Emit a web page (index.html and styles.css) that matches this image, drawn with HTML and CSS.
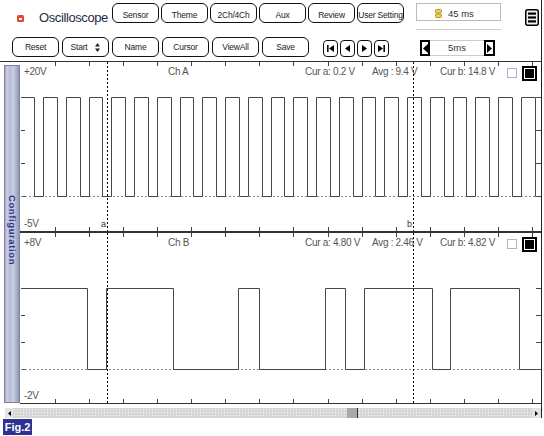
FILE: index.html
```html
<!DOCTYPE html>
<html lang="en">
<head>
    <meta charset="UTF-8">
    <meta name="viewport" content="width=device-width, initial-scale=1.0">
    <title>Oscilloscope</title>
    <link rel="stylesheet" href="styles.css">
</head>
<body>

<div class="app">

    <!-- first row: title, mode buttons, time, menu -->
    <div class="topbar">
        <span class="logo"></span>
        <span class="title">Oscilloscope</span>
        <div class="btns">
            <button class="btn">Sensor</button>
            <button class="btn">Theme</button>
            <button class="btn">2Ch/4Ch</button>
            <button class="btn">Aux</button>
            <button class="btn">Review</button>
            <button class="btn">User Setting</button>
        </div>
        <div class="timewrap">
            <div class="timebox">
                <svg width="7" height="9" viewBox="0 0 7 9"><rect x=".5" y=".5" width="6" height="3.5" rx="1" fill="#efd163" stroke="#b8961e"/><rect x=".5" y="5" width="6" height="3.5" rx="1" fill="#efd163" stroke="#b8961e"/></svg>
                45 ms
            </div>
        </div>
        <svg class="menu" width="14" height="17" viewBox="0 0 14 17">
            <rect x=".75" y=".75" width="12.5" height="15.5" rx="2" fill="#f2f2f2" stroke="#000" stroke-width="1.5"/>
            <rect x="3" y="3.5" width="8" height="2.2" fill="#000"/>
            <rect x="3" y="7.4" width="8" height="2.2" fill="#000"/>
            <rect x="3" y="11.3" width="8" height="2.2" fill="#000"/>
        </svg>
    </div>

    <!-- second row: actions, playback, time base -->
    <div class="toolbar">
        <button class="btn">Reset</button>
        <button class="btn select">Start
            <svg width="5" height="9" viewBox="0 0 5 9"><path d="M2.5 0L5 3.5H0z M0 5.5H5L2.5 9z" fill="#222"/></svg>
        </button>
        <button class="btn">Name</button>
        <button class="btn">Cursor</button>
        <button class="btn">ViewAll</button>
        <button class="btn">Save</button>

        <div class="nav">
            <button class="nav-btn"><svg width="7" height="7" viewBox="0 0 7 7"><path d="M0 0h1.6v7H0z M7 0v7L2 3.5z"/></svg></button>
            <button class="nav-btn"><svg width="7" height="7" viewBox="0 0 7 7"><path d="M6 0v7L1 3.5z"/></svg></button>
            <button class="nav-btn"><svg width="7" height="7" viewBox="0 0 7 7"><path d="M1 0v7l5-3.5z"/></svg></button>
            <button class="nav-btn"><svg width="7" height="7" viewBox="0 0 7 7"><path d="M0 0v7l5-3.5z M5.4 0H7v7H5.4z"/></svg></button>
        </div>

        <div class="spin">
            <span class="arrow left"><svg width="5" height="9" viewBox="0 0 5 9"><path d="M5 0v9L0 4.5z"/></svg></span>
            <span class="field">5ms</span>
            <span class="arrow right"><svg width="5" height="9" viewBox="0 0 5 9"><path d="M0 0v9l5-4.5z"/></svg></span>
        </div>
    </div>

    <!-- scope screen -->
    <div class="scope">
        <div class="sidebar"><span>Configuration</span></div>

        <div class="panels">
            <div class="panel ch-a">
                <svg class="plot" width="521" height="169" viewBox="0 0 521 169">
                    <defs>
                        <path id="xt" d="M35.5 0v4M69.5 0v4M103.5 0v4M137.5 0v4M171.5 0v4M205.5 0v4M239.5 0v4M273.5 0v4M308.5 0v4M342.5 0v4M376.5 0v4M410.5 0v4M444.5 0v4M478.5 0v4M512.5 0v4"/>
                    </defs>
                    <use href="#xt" class="tick"/>
                    <use href="#xt" class="tick" y="165"/>
                    <path class="tick" d="M1 35.5h4M1 68.5h4M1 101.5h4M1 134.5h4M516 35.5h5M516 68.5h5M516 101.5h5M516 134.5h5"/>
                    <path class="base" d="M1 134.5H521"/>
                    <path class="wave" d="M1 35.5H14.5V134.5H23.5V35.5H37.5V134.5H46.5V35.5H60.5V134.5H69.5V35.5H82.5V134.5H91.5V35.5H105.5V134.5H114.5V35.5H128.5V134.5H137.5V35.5H151.5V134.5H160.5V35.5H173.5V134.5H182.5V35.5H196.5V134.5H205.5V35.5H219.5V134.5H228.5V35.5H242.5V134.5H251.5V35.5H264.5V134.5H273.5V35.5H287.5V134.5H296.5V35.5H310.5V134.5H319.5V35.5H333.5V134.5H342.5V35.5H355.5V134.5H364.5V35.5H378.5V134.5H387.5V35.5H401.5V134.5H410.5V35.5H424.5V134.5H433.5V35.5H446.5V134.5H455.5V35.5H469.5V134.5H478.5V35.5H492.5V134.5H501.5V35.5H515.5V134.5H521"/>
                    <path class="cur" d="M87.5 0V169M393.5 0V169"/>
                    <text class="mark" x="81" y="165">a</text>
                    <text class="mark" x="387" y="165">b</text>
                </svg>
                <div class="overlay">
                    <div class="head">
                        <span>+20V</span>
                        <span>Ch A</span>
                        <span>Cur a: 0.2 V</span>
                        <span>Avg : 9.4 V</span>
                        <span>Cur b: 14.8 V</span>
                        <span class="cb"></span>
                        <span class="cb on"></span>
                    </div>
                    <div class="foot">-5V</div>
                </div>
            </div>

            <div class="panel ch-b">
                <svg class="plot" width="521" height="170" viewBox="0 0 521 170">
                    <use href="#xt" class="tick"/>
                    <use href="#xt" class="tick" y="166"/>
                    <path class="tick" d="M1 55.5h4M1 82.5h4M1 109.5h4M1 136.5h4M516 55.5h5M516 82.5h5M516 109.5h5M516 136.5h5"/>
                    <path class="base" d="M1 136.5H521"/>
                    <path class="wave" d="M1 55.5H67.5V136.5H86.5V55.5H153.5V136.5H218.5V55.5H239.5V136.5H305.5V55.5H325.5V136.5H344.5V55.5H412.5V136.5H430.5V55.5H499.5V136.5H521"/>
                    <path class="cur" d="M87.5 0V170M393.5 0V170"/>
                </svg>
                <div class="overlay">
                    <div class="head">
                        <span>+8V</span>
                        <span>Ch B</span>
                        <span>Cur a: 4.80 V</span>
                        <span>Avg : 2.46 V</span>
                        <span>Cur b: 4.82 V</span>
                        <span class="cb"></span>
                        <span class="cb on"></span>
                    </div>
                    <div class="foot">-2V</div>
                </div>
            </div>
        </div>
    </div>

    <div class="scrollbar">
        <span class="sb-btn"><svg width="3" height="5" viewBox="0 0 3 5"><path d="M3 0v5L0 2.5z"/></svg></span>
        <span class="track"><span class="thumb"></span></span>
        <span class="sb-btn end"><svg width="3" height="5" viewBox="0 0 3 5"><path d="M0 0v5l3-2.5z"/></svg></span>
    </div>
</div>

<div class="fig">Fig.2</div>

</body>
</html>
```

FILE: styles.css
```css
body {
    margin: 0;
    background: #fff;
    font-family: "Liberation Sans", Arial, sans-serif;
    color: #222;
}

.app {
    width: 541px;
    padding-top: 3px;
    border-right: 1px solid #222;
}

/* top row */
.topbar {
    display: flex;
    align-items: flex-start;
    height: 20px;
    padding-left: 17px;
}
.logo {
    display: flex;
    align-items: center;
    justify-content: center;
    width: 7px;
    height: 7px;
    margin-top: 12px;
    background: #e04a2f;
    border-radius: 1.5px;
}
.logo::after {
    content: "";
    width: 3px;
    height: 1.5px;
    margin-top: 1px;
    background: #fff;
}
.title {
    width: 73px;
    margin-left: 15px;
    padding-top: 8px;
    font-size: 13px;
    line-height: 13px;
    letter-spacing: -0.4px;
    color: #1f2a4a;
}
.btns {
    display: flex;
    gap: 2px;
}
.btn {
    width: 47px;
    height: 20px;
    box-sizing: border-box;
    padding: 0;
    border: 1px solid #111;
    border-radius: 6px;
    background: #fff;
    font-family: "Liberation Sans", Arial, sans-serif;
    font-size: 8.5px;
    letter-spacing: -0.2px;
    color: #222;
}
.topbar .btn {
    padding-top: 4px;
}
.timewrap {
    margin-left: 12px;
    padding-bottom: 8px;
    border-bottom: 1px solid #ccc;
}
.timebox {
    display: flex;
    align-items: center;
    gap: 6px;
    width: 85px;
    height: 18px;
    box-sizing: border-box;
    padding: 3px 0 0 18px;
    border: 1px solid #bbb;
    font-size: 9.5px;
    color: #333;
}
.menu {
    margin: 6px 0 0 24px;
}

/* second row */
.toolbar {
    display: flex;
    align-items: flex-start;
    gap: 3px;
    height: 20px;
    margin-top: 14px;
    padding-left: 12px;
}
.select {
    display: flex;
    align-items: center;
    justify-content: center;
    gap: 8px;
}
.nav {
    display: flex;
    gap: 2px;
    margin: 3px 0 0 11px;
}
.nav-btn {
    display: flex;
    align-items: center;
    justify-content: center;
    width: 15px;
    height: 17px;
    box-sizing: border-box;
    padding: 0;
    border: 1px solid #111;
    border-radius: 4px;
    background: #fff;
}
.spin {
    display: flex;
    height: 16px;
    margin: 3px 0 0 28px;
}
.arrow {
    display: flex;
    align-items: center;
    justify-content: center;
    width: 10px;
    box-sizing: border-box;
    border: 2px solid #000;
    background: #fff;
}
.arrow.right {
    width: 11px;
}
.field {
    width: 54px;
    box-sizing: border-box;
    border-top: 1px solid #ccc;
    border-bottom: 1px solid #ccc;
    font-size: 9.5px;
    line-height: 14px;
    text-align: center;
    color: #333;
}

/* scope screen */
.scope {
    display: flex;
    margin-top: 4px;
    border-top: 1px solid #333;
}
.sidebar {
    display: flex;
    align-items: center;
    justify-content: center;
    width: 16px;
    box-sizing: border-box;
    margin: 3px 0 1px 4px;
    border: 1px solid #7e84a3;
    background: linear-gradient(to right, #a3a8c4 0, #cdd0e3 2px, #b5b9d3 5px, #cdd0e3 8px, #b0b5cf 11px, #8f95b3 14px);
}
.sidebar span {
    writing-mode: vertical-rl;
    margin-bottom: 8px;
    font-size: 9.5px;
    font-weight: bold;
    letter-spacing: 0.6px;
    color: #2b3990;
}
.panels {
    display: flex;
    flex-direction: column;
    width: 521px;
}
.panel {
    display: grid;
    height: 169px;
    border-bottom: 2px solid #333;
}
.panel.ch-b {
    height: 170px;
    border-bottom-width: 1px;
}
.panel > * {
    grid-area: 1 / 1;
}
.plot {
    display: block;
}
.tick {
    stroke: #444;
    fill: none;
}
.base {
    stroke: #8a8a8a;
    stroke-dasharray: 2 2;
    fill: none;
}
.cur {
    stroke: #000;
    stroke-dasharray: 2 2;
    fill: none;
}
.wave {
    stroke: #474747;
    stroke-width: 1;
    fill: none;
}
.mark {
    font-family: "Liberation Sans", Arial, sans-serif;
    font-size: 9px;
    fill: #333;
}
.overlay {
    display: flex;
    flex-direction: column;
    justify-content: space-between;
    padding: 4px 3px 1px 4px;
    font-size: 10px;
    line-height: 12px;
    letter-spacing: -0.3px;
    color: #555;
}
.head {
    display: grid;
    grid-template-columns: 144px 137px 67px 68px 67px 15px 15px;
    align-items: start;
}
.cb {
    width: 10px;
    height: 10px;
    box-sizing: border-box;
    margin-top: 2px;
    border: 1px solid #a9b3cc;
    background: #fff;
}
.cb.on {
    width: 15px;
    height: 15px;
    margin-top: 0;
    border: 2px solid #000;
    background: #000;
    box-shadow: inset 0 0 0 1px #fff;
}

/* scrollbar */
.scrollbar {
    display: flex;
    height: 10px;
    margin: 4px 0 0 5px;
}
.sb-btn {
    display: flex;
    align-items: center;
    justify-content: center;
    width: 8px;
    background: #e4e4e4;
}
.sb-btn.end {
    width: 9px;
}
.track {
    display: flex;
    flex: 1;
    background-color: #d6d6d6;
    background-image: radial-gradient(circle, #f4f4f4 0.7px, transparent 0.9px);
    background-size: 3px 3px;
}
.thumb {
    width: 10px;
    margin-left: 334px;
    background: #a9a9a9;
    border-right: 1px solid #333;
}

.fig {
    width: 29px;
    height: 16px;
    margin: 1px 0 0 3px;
    background: #2e3192;
    color: #fff;
    font-size: 11px;
    font-weight: bold;
    line-height: 16px;
    text-align: center;
}
```
